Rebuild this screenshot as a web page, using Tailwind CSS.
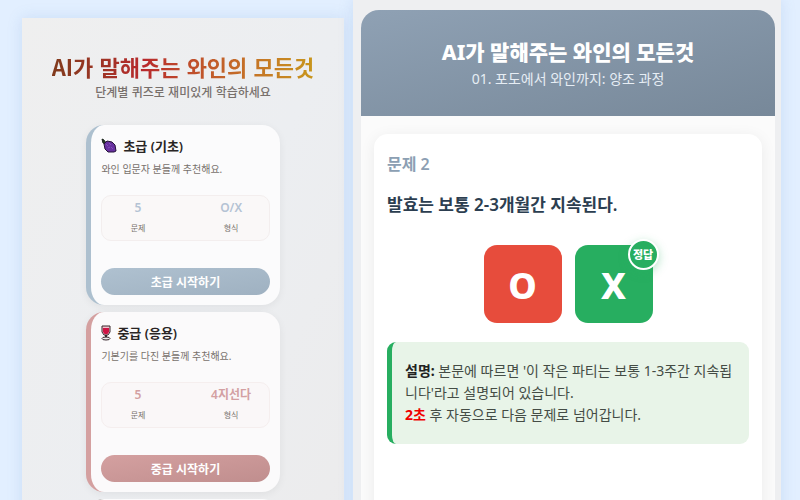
<!DOCTYPE html>
<html lang="ko">
    <head>
        <meta charset="UTF-8">
        <meta name="viewport" content="width=device-width, initial-scale=1.0">
        <title>AI가 말해주는 와인의 모든것</title>
        <script src="https://cdn.jsdelivr.net/npm/@tailwindcss/browser@4"></script>
    </head>
    <body class="bg-[#e2efff] font-['Noto_Sans','Noto_Sans_CJK_KR',sans-serif]">
        <div class="grid grid-cols-[322fr_428fr] gap-[9px] h-screen overflow-hidden pl-[22px] pr-[19px]">

            <!-- Choix du niveau -->
            <section class="mt-[18px] pt-[34px] bg-linear-to-br from-[#efefef] via-[#eceef1] to-[#ecebeb] shadow-[0_0_14px_rgba(90,140,200,0.18)]">
                <header class="text-center font-['Noto_Sans_CJK_KR',sans-serif]">
                    <h1 class="text-[22px] leading-7 font-semibold w-fit mx-auto bg-linear-to-r from-[#803a1c] via-[#b8282c] via-35% to-[#c8961c] bg-clip-text text-transparent">AI가 말해주는 와인의 모든것</h1>
                    <p class="mt-0.5 text-xs leading-5 font-medium text-[#78706c]">단계별 퀴즈로 재미있게 학습하세요</p>
                </header>

                <div class="w-3/5 mx-auto mt-[23px] flex flex-col gap-[7px]">
                    <article class="border-l-[5px] border-[#adc0cf] rounded-[18px] bg-[#fbfbfc] px-[10px] py-[10px] shadow-[0_2px_8px_rgba(0,0,0,0.06)]">
                        <h2 class="flex items-center gap-1.5 text-[13px] leading-[22px] font-semibold text-[#292524]">
                            <svg class="size-4" viewBox="0 0 16 16">
                                <path d="M1 1l2 1 1 2 3 0-3 2-2-1z" fill="#263b20" stroke="#18221a"/>
                                <path d="M3 6l3-3 5 1 3 3 1 6-2 1-6 0-3-3z" fill="#6831a0" stroke="#241238"/>
                                <path d="M5 6l2 2M8 5l2 2M7 10l2-1M10 9l2 2" stroke="#8450b8"/>
                            </svg>
                            초급 (기초)
                        </h2>
                        <p class="mt-1 text-[10px] leading-4 text-[#78716c]">와인 입문자 분들께 추천해요.</p>
                        <dl class="mt-[18px] h-[46px] grid grid-cols-[3fr_4fr] border border-[#f3eeee] rounded-[10px] bg-[#faf8f8] text-center">
                            <div class="flex flex-col-reverse justify-end pt-1">
                                <dt class="mt-1 text-[8px] leading-4 text-[#78716c]">문제</dt>
                                <dd class="text-xs leading-4 font-semibold text-[#b4c3d4]">5</dd>
                            </div>
                            <div class="flex flex-col-reverse justify-end pt-1 pl-5">
                                <dt class="mt-1 text-[8px] leading-4 text-[#78716c]">형식</dt>
                                <dd class="text-xs leading-4 font-semibold text-[#b4c3d4]">O/X</dd>
                            </div>
                        </dl>
                        <button class="mt-[27px] block w-full h-[27px] pt-0.5 rounded-full bg-linear-to-br from-[#afc1d0] to-[#9fb1c1] text-xs leading-4 font-bold text-white">초급 시작하기</button>
                    </article>

                    <article class="border-l-[5px] border-[#d4a0a0] rounded-[18px] bg-[#fbfafb] px-[10px] py-[10px] shadow-[0_2px_8px_rgba(0,0,0,0.06)]">
                        <h2 class="flex items-center gap-1.5 text-[13px] leading-[22px] font-semibold text-[#292524]">
                            <svg class="w-[10px] h-4" viewBox="0 0 10 16">
                                <path d="M1 1h8v6L7 10H3L1 7z" fill="#f0c4cf" stroke="#38262b"/>
                                <path d="M2 3h6v4L6.5 9h-3L2 7z" fill="#cf1545"/>
                                <path d="M5 10v3" stroke="#38262b" stroke-width="2"/>
                                <ellipse cx="5" cy="13.5" rx="4" ry="1.5" fill="#eee" stroke="#38262b"/>
                            </svg>
                            중급 (응용)
                        </h2>
                        <p class="mt-1 text-[10px] leading-4 text-[#78716c]">기본기를 다진 분들께 추천해요.</p>
                        <dl class="mt-[18px] h-[46px] grid grid-cols-[3fr_4fr] border border-[#f5eeee] rounded-[10px] bg-[#faf7f8] text-center">
                            <div class="flex flex-col-reverse justify-end pt-1">
                                <dt class="mt-1 text-[8px] leading-4 text-[#78716c]">문제</dt>
                                <dd class="text-xs leading-4 font-semibold text-[#d3a0a2]">5</dd>
                            </div>
                            <div class="flex flex-col-reverse justify-end pt-1 pl-5">
                                <dt class="mt-1 text-[8px] leading-4 text-[#78716c]">형식</dt>
                                <dd class="text-xs leading-4 font-semibold text-[#d3a0a2]">4지선다</dd>
                            </div>
                        </dl>
                        <button class="mt-[27px] block w-full h-[27px] pt-0.5 rounded-full bg-linear-to-br from-[#d4a0a0] to-[#c08e8e] text-xs leading-4 font-bold text-white">중급 시작하기</button>
                    </article>

                    <article class="h-44 border-l-[5px] border-[#a8a29e] rounded-[18px] bg-[#fbfbfc]"></article>
                </div>
            </section>

            <!-- Question en cours -->
            <section class="flex flex-col pt-[10px] pl-2 pr-1.5 bg-[#eeeff1] shadow-[0_0_14px_rgba(90,140,200,0.18)]">
                <header class="h-[106px] rounded-t-[18px] bg-linear-to-br from-[#8fa1b4] to-[#778899] pt-7 text-center text-white">
                    <h1 class="text-[21px] leading-7 font-extrabold">AI가 말해주는 와인의 모든것</h1>
                    <p class="text-sm leading-[26px] text-[#e6edf4]">01. 포도에서 와인까지: 양조 과정</p>
                </header>

                <main class="flex-1 bg-[#fbfbfb] px-[13px] pt-[18px]">
                    <div class="h-full rounded-t-[14px] bg-white px-[13px] pt-[18px] shadow-[0_3px_16px_rgba(0,0,0,0.07)]">
                        <h2 class="text-base leading-6 font-semibold text-[#8c9fb3]">문제 2</h2>
                        <p class="mt-[17px] text-[17px] leading-6 font-semibold text-[#2c3e50]">발효는 보통 2-3개월간 지속된다.</p>

                        <div class="mt-7 flex justify-center gap-[13px] text-4xl font-extrabold text-white">
                            <button class="size-[78px] pt-1 rounded-[13px] bg-[#e74c3c]">O</button>
                            <button class="relative size-[78px] pt-1 rounded-[13px] bg-[#27ae60]">X
                                <span class="absolute -top-1.5 -right-1.5 flex items-center justify-center size-[31px] rounded-full border-2 border-white bg-[#27ae60] text-[11px] leading-4 shadow-[0_3px_10px_rgba(39,174,96,0.35)]">정답</span>
                            </button>
                        </div>

                        <div class="mt-[19px] border-l-[5px] border-[#27ae60] rounded-[9px] bg-[#e8f4e8] px-[13px] py-[18px] text-sm leading-[22px] text-[#444c45] break-all">
                            <p><strong class="text-[#222]">설명:</strong> 본문에 따르면 '이 작은 파티는 보통 1-3주간 지속됩니다'라고 설명되어 있습니다.</p>
                            <p><strong class="text-[#f00000]">2초</strong> 후 자동으로 다음 문제로 넘어갑니다.</p>
                        </div>
                    </div>
                </main>
            </section>
        </div>
    </body>
</html>
